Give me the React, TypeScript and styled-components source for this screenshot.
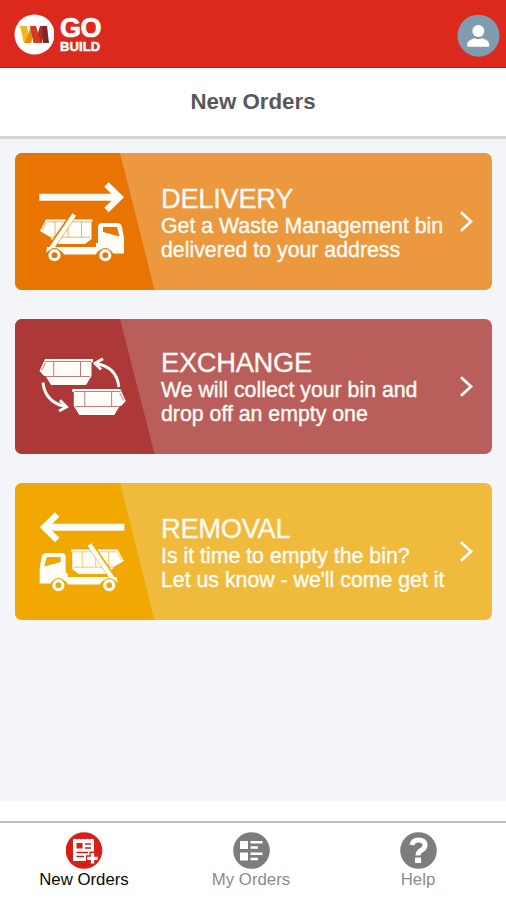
import React from "react";
import styled, { createGlobalStyle } from "styled-components";

const GlobalStyle = createGlobalStyle`
  * { box-sizing: border-box; }
  body {
    margin: 0;
    font-family: "Liberation Sans", Arial, sans-serif;
    background: #fff;
  }
`;

const Screen = styled.div`
  width: 506px;
  height: 900px;
  display: flex;
  flex-direction: column;
  overflow: hidden;
`;

const TopBar = styled.header`
  height: 68px;
  flex: none;
  display: flex;
  align-items: flex-start;
  justify-content: space-between;
  padding: 14px 6px 0 14px;
  background: #db291e;
  border-bottom: 1px solid #cf1a10;
`;

const Brand = styled.div`
  display: flex;
  gap: 6px;
`;

const BrandName = styled.div`
  color: #fff;
  font-weight: bold;
  padding-top: 3px;
`;

const BrandGo = styled.div`
  font-size: 27px;
  line-height: 23px;
  height: 23px;
  letter-spacing: -0.6px;
  -webkit-text-stroke: 0.7px #fff;
`;

const BrandBuild = styled.div`
  font-size: 13px;
  line-height: 13px;
  letter-spacing: 0.1px;
  -webkit-text-stroke: 0.5px #fff;
`;

const TitleBar = styled.div`
  height: 71px;
  flex: none;
  padding-top: 20px;
  text-align: center;
  border-bottom: 3px solid #d4d5d9;
`;

const Title = styled.h1`
  margin: 0;
  color: #58585a;
  font-size: 22.3px;
  line-height: 27px;
  font-weight: bold;
`;

const Content = styled.main`
  height: 662px;
  flex: none;
  background: #f3f5f9;
  padding: 14px 14px 0 15px;
  display: flex;
  flex-direction: column;
  gap: 29px;
`;

const Card = styled.button<{ $light: string; $height: number }>`
  height: ${(p) => p.$height}px;
  flex: none;
  display: flex;
  align-items: stretch;
  padding: 0;
  border: 0;
  border-radius: 7px;
  overflow: hidden;
  color: #fffaf3;
  text-align: left;
  font-family: inherit;
  background: ${(p) => p.$light};
`;

const Panel = styled.div<{ $color: string }>`
  width: 140px;
  flex: none;
  background: ${(p) => p.$color};
  clip-path: polygon(0 0, 105px 0, 139.5px 100%, 0 100%);
  svg { display: block; }
`;

const CardText = styled.div<{ $top: number }>`
  flex: 1;
  padding: ${(p) => p.$top}px 0 0 6px;
  white-space: nowrap;
`;

const CardTitle = styled.div`
  font-size: 27.3px;
  line-height: 29px;
  height: 30px;
  letter-spacing: -0.3px;
  -webkit-text-stroke: 0.3px currentColor;
`;

const CardBody = styled.div`
  font-size: 21.3px;
  line-height: 24px;
  -webkit-text-stroke: 0.4px currentColor;
`;

const Chevron = styled.svg`
  width: 16px;
  height: 24px;
  flex: none;
  align-self: center;
  margin-right: 18px;
`;

const TabBar = styled.nav`
  margin-top: 20px;
  height: 79px;
  flex: none;
  border-top: 2px solid #bcbcbc;
  display: grid;
  grid-template-columns: 168px 166px 168px;
`;

const Tab = styled.div<{ $active?: boolean }>`
  display: flex;
  flex-direction: column;
  align-items: center;
  padding-top: 9px;
  color: ${(p) => (p.$active ? "#080808" : "#8c8c8c")};
  font-size: 16.8px;
  line-height: 19px;
  svg { margin-bottom: 1px; }
`;

const Skip = () => (
  <g>
    <path d="M45 219H93V222H91.5V236L86 245H51L45.5 236H44L39.5 231Z" fill="currentColor" />
    <path d="M44.5 221.5H91M46 236.5H90M53.7 222V236M80.5 222V236M45.5 223L41.5 230.5" stroke="var(--panel)" strokeWidth="0.9" fill="none" opacity="0.75" />
  </g>
);

const Truck = () => (
  <g>
    <path d="M46 219.5H92.5V221.5H91.5V239L85 244H55L50 237L40 231Z" fill="currentColor" />
    <path d="M47 221.8H91M50 237.2H90M55 222V237M68 222V237M81.5 222V237M46 222.5L42 230" stroke="var(--panel)" strokeWidth="0.9" fill="none" opacity="0.65" />
    <path d="M50.8 248L73.5 214.5" stroke="var(--panel)" strokeWidth="6.6" />
    <path d="M51.5 248L74.3 214.5" stroke="currentColor" strokeWidth="4.5" />
    <path d="M47 247H96V243H98V227Q98 223 102 223H117.5Q121 223 122 227L124 238V253.5H113Q111 249 105 249Q98 249 96 254.5H64Q61 249 54 249Q48 250 46 253Z" fill="currentColor" />
    <path d="M103 227H117L119.5 236.5L103 232Z" fill="var(--panel)" />
    {[54.5, 105.3].map((cx) => (
      <g key={cx}>
        <circle cx={cx} cy="255.2" r="7.1" fill="var(--panel)" />
        <circle cx={cx} cy="255.2" r="4.5" fill="none" stroke="currentColor" strokeWidth="3.2" />
      </g>
    ))}
  </g>
);

const DeliveryIcon = () => (
  <g>
    <path d="M39.3 197.2H120" stroke="currentColor" strokeWidth="7" />
    <path d="M106.5 184.5L119.5 197.2L106.5 210" stroke="currentColor" strokeWidth="6.3" fill="none" />
    <Truck />
  </g>
);

const RemovalIcon = () => (
  <g transform="translate(163.7 0) scale(-1 1)">
    <DeliveryIcon />
  </g>
);

const ExchangeIcon = () => (
  <g>
    <g transform="translate(0 140)">
      <Skip />
    </g>
    <g transform="translate(165.3 170) scale(-1 1)">
      <Skip />
    </g>
    <g fill="none" stroke="currentColor" strokeWidth="2.9">
      <path d="M43 382.5Q45 402 65 406.3" />
      <path d="M60 400.3L66.5 406.8L59 411" />
      <path d="M118.8 387Q117 367 96 363.5" />
      <path d="M103 358.7L95 363.3L101 369.5" />
    </g>
  </g>
);

const PanelArt = styled.svg<{ $panel: string }>`
  --panel: ${(p) => p.$panel};
  color: #fffdf8;
`;

interface Order {
  title: string;
  lines: [string, string];
  base: string;
  light: string;
  height: number;
  textTop: number;
  origin: number;
  Icon: React.FC;
}

const orders: Order[] = [
  {
    title: "DELIVERY",
    lines: ["Get a Waste Management bin", "delivered to your address"],
    base: "#e87502",
    light: "#ec983f",
    height: 137,
    textTop: 31,
    origin: 153,
    Icon: DeliveryIcon,
  },
  {
    title: "EXCHANGE",
    lines: ["We will collect your bin and", "drop off an empty one"],
    base: "#ad3838",
    light: "#ba5e5c",
    height: 135,
    textTop: 29,
    origin: 319,
    Icon: ExchangeIcon,
  },
  {
    title: "REMOVAL",
    lines: ["Is it time to empty the bin?", "Let us know - we'll come get it"],
    base: "#f1a802",
    light: "#f0bb3d",
    height: 137,
    textTop: 31,
    origin: 153,
    Icon: RemovalIcon,
  },
];

const LogoMark = () => (
  <svg width="40" height="41" viewBox="0 0 40 41">
    <circle cx="20.5" cy="20.5" r="20" fill="#fff" />
    <path d="M6 12H13L16 29H10Z" fill="#f2b51c" />
    <path d="M11 29L17 12H22L17 29Z" fill="#e78b16" />
    <path d="M26 12H31L28 29H21Z" fill="#b32b22" />
    <path d="M16 12H22L27 29H19.5Z" fill="#d83a20" />
    <path d="M28 12H33L35 29H29Z" fill="#7b2824" />
  </svg>
);

const Avatar = () => (
  <svg width="43" height="44" viewBox="0 0 43 44">
    <circle cx="21.5" cy="21.7" r="21" fill="#829caf" />
    <circle cx="21.3" cy="17" r="6" fill="#fff" />
    <path d="M10.3 32.7V30C10.3 27.5 15 24.5 18 24.3Q21.3 26 24.7 24.3C28 24.5 32.2 27.5 32.2 30V32.7Z" fill="#fff" />
  </svg>
);

const NewOrdersIcon = () => (
  <svg width="37" height="37" viewBox="0 0 37 37">
    <circle cx="18" cy="18.5" r="18.3" fill="#d91e18" />
    <path d="M7 7.5Q9 6 11 7.5Q13 6 15 7.5Q17 6 19 7.5Q21 6 23 7.5Q25 6 28 7.5V29H7Z" fill="#fff" />
    <path d="M10.5 11H16.5V16.5H10.5Z" fill="#d91e18" />
    <path d="M19 12H25M19 16H25M10.5 20.5H22M10.5 24.5H18" stroke="#d91e18" strokeWidth="1.7" />
    <path d="M26.5 19.5V32.5M20 26.3H33" stroke="#d91e18" strokeWidth="6" />
    <path d="M26.5 21V31.6M21.2 26.3H31.8" stroke="#fff" strokeWidth="3.3" />
  </svg>
);

const MyOrdersIcon = () => (
  <svg width="37" height="37" viewBox="0 0 37 37">
    <circle cx="18.5" cy="18.5" r="18.3" fill="#7d7d7d" />
    <path d="M7 9H15V17H7ZM7 20.5H15V28.5H7Z" fill="#fff" />
    <path d="M17.5 10.2H29.5M17.5 15.5H25M17.5 21.8H29.5M17.5 27H25" stroke="#fff" strokeWidth="2.4" />
  </svg>
);

const HelpIcon = () => (
  <svg width="37" height="37" viewBox="0 0 37 37">
    <circle cx="18.5" cy="18.5" r="18.3" fill="#7d7d7d" />
    <path d="M11.8 13Q13 8 18.5 8Q25 8 25 13.2Q25 16.2 21.5 18.2Q18 20.2 18 23.5" stroke="#fff" strokeWidth="5" fill="none" />
    <path d="M15 25.5H21V31H15Z" fill="#fff" />
  </svg>
);

export default function App() {
  return (
    <Screen>
      <GlobalStyle />
      <TopBar>
        <Brand>
          <LogoMark />
          <BrandName>
            <BrandGo>GO</BrandGo>
            <BrandBuild>BUILD</BrandBuild>
          </BrandName>
        </Brand>
        <Avatar />
      </TopBar>
      <TitleBar>
        <Title>New Orders</Title>
      </TitleBar>
      <Content>
        {orders.map(({ title, lines, base, light, height, textTop, origin, Icon }) => (
          <Card key={title} $light={light} $height={height}>
            <Panel $color={base}>
              <PanelArt $panel={base} width="140" height={height} viewBox={`15 ${origin} 140 ${height}`}>
                <Icon />
              </PanelArt>
            </Panel>
            <CardText $top={textTop}>
              <CardTitle>{title}</CardTitle>
              <CardBody>
                {lines[0]}
                <br />
                {lines[1]}
              </CardBody>
            </CardText>
            <Chevron viewBox="0 0 16 24" fill="none" stroke="#fffaf3" strokeWidth="2.8">
              <path d="M3 2.2L13 11.5L3 20.8" />
            </Chevron>
          </Card>
        ))}
      </Content>
      <TabBar>
        <Tab $active>
          <NewOrdersIcon />
          New Orders
        </Tab>
        <Tab>
          <MyOrdersIcon />
          My Orders
        </Tab>
        <Tab>
          <HelpIcon />
          Help
        </Tab>
      </TabBar>
    </Screen>
  );
}
